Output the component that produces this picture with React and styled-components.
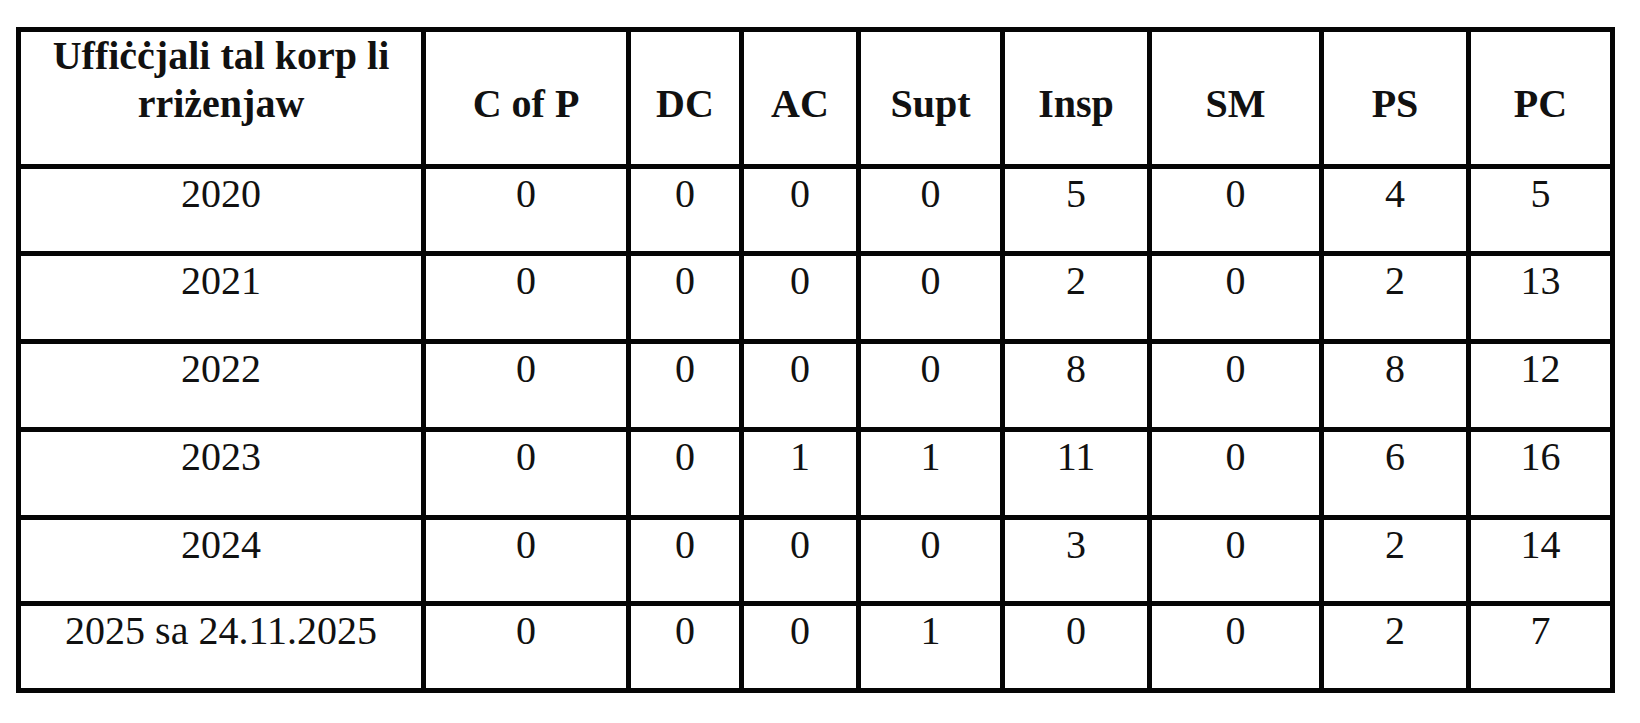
import React from "react";
import styled, { createGlobalStyle } from "styled-components";

const GlobalStyle = createGlobalStyle`
  html, body {
    margin: 0;
    padding: 0;
    background: #ffffff;
  }
  body {
    font-family: "Liberation Serif", "Times New Roman", serif;
    color: #111;
  }
`;

const Page = styled.div`
  padding: 27px 0 0 16px;
`;

const Table = styled.div`
  display: grid;
  width: fit-content;
  grid-template-columns: 400px 200px 108px 112px 139px 142px 167px 142px 139px;
  grid-template-rows: 132px 82px 83px 83px 83px 81px 82px;
  gap: 5px;
  padding: 5px;
  background: #050505;
`;

const Row = styled.div`
  display: contents;
`;

const HeaderCell = styled.div`
  background: #ffffff;
  font-family: "Liberation Serif", "Times New Roman", serif;
  font-weight: 700;
  font-size: 40px;
  line-height: 48px;
  text-align: center;
  color: #111;
  padding-top: ${(p) => (p.$lead ? "0" : "48px")};
  padding-left: 4px;
  padding-right: 4px;
`;

const Cell = styled.div`
  background: #ffffff;
  font-family: "Liberation Serif", "Times New Roman", serif;
  font-size: 40px;
  line-height: 48px;
  text-align: center;
  color: #111;
  padding-top: 1px;
  white-space: nowrap;
`;

const headers = ["C of P", "DC", "AC", "Supt", "Insp", "SM", "PS", "PC"];

const rows = [
  ["2020", 0, 0, 0, 0, 5, 0, 4, 5],
  ["2021", 0, 0, 0, 0, 2, 0, 2, 13],
  ["2022", 0, 0, 0, 0, 8, 0, 8, 12],
  ["2023", 0, 0, 1, 1, 11, 0, 6, 16],
  ["2024", 0, 0, 0, 0, 3, 0, 2, 14],
  ["2025 sa 24.11.2025", 0, 0, 0, 1, 0, 0, 2, 7],
];

export default function App() {
  return (
    <>
      <GlobalStyle />
      <Page>
        <Table role="table">
          <Row role="row">
            <HeaderCell $lead role="columnheader">
              Uffiċċjali tal korp li
              <br />
              rriżenjaw
            </HeaderCell>
            {headers.map((h) => (
              <HeaderCell key={h} role="columnheader">
                {h}
              </HeaderCell>
            ))}
          </Row>
          {rows.map((r) => (
            <Row key={r[0]} role="row">
              {r.map((v, i) => (
                <Cell key={i} role="cell">
                  {v}
                </Cell>
              ))}
            </Row>
          ))}
        </Table>
      </Page>
    </>
  );
}
